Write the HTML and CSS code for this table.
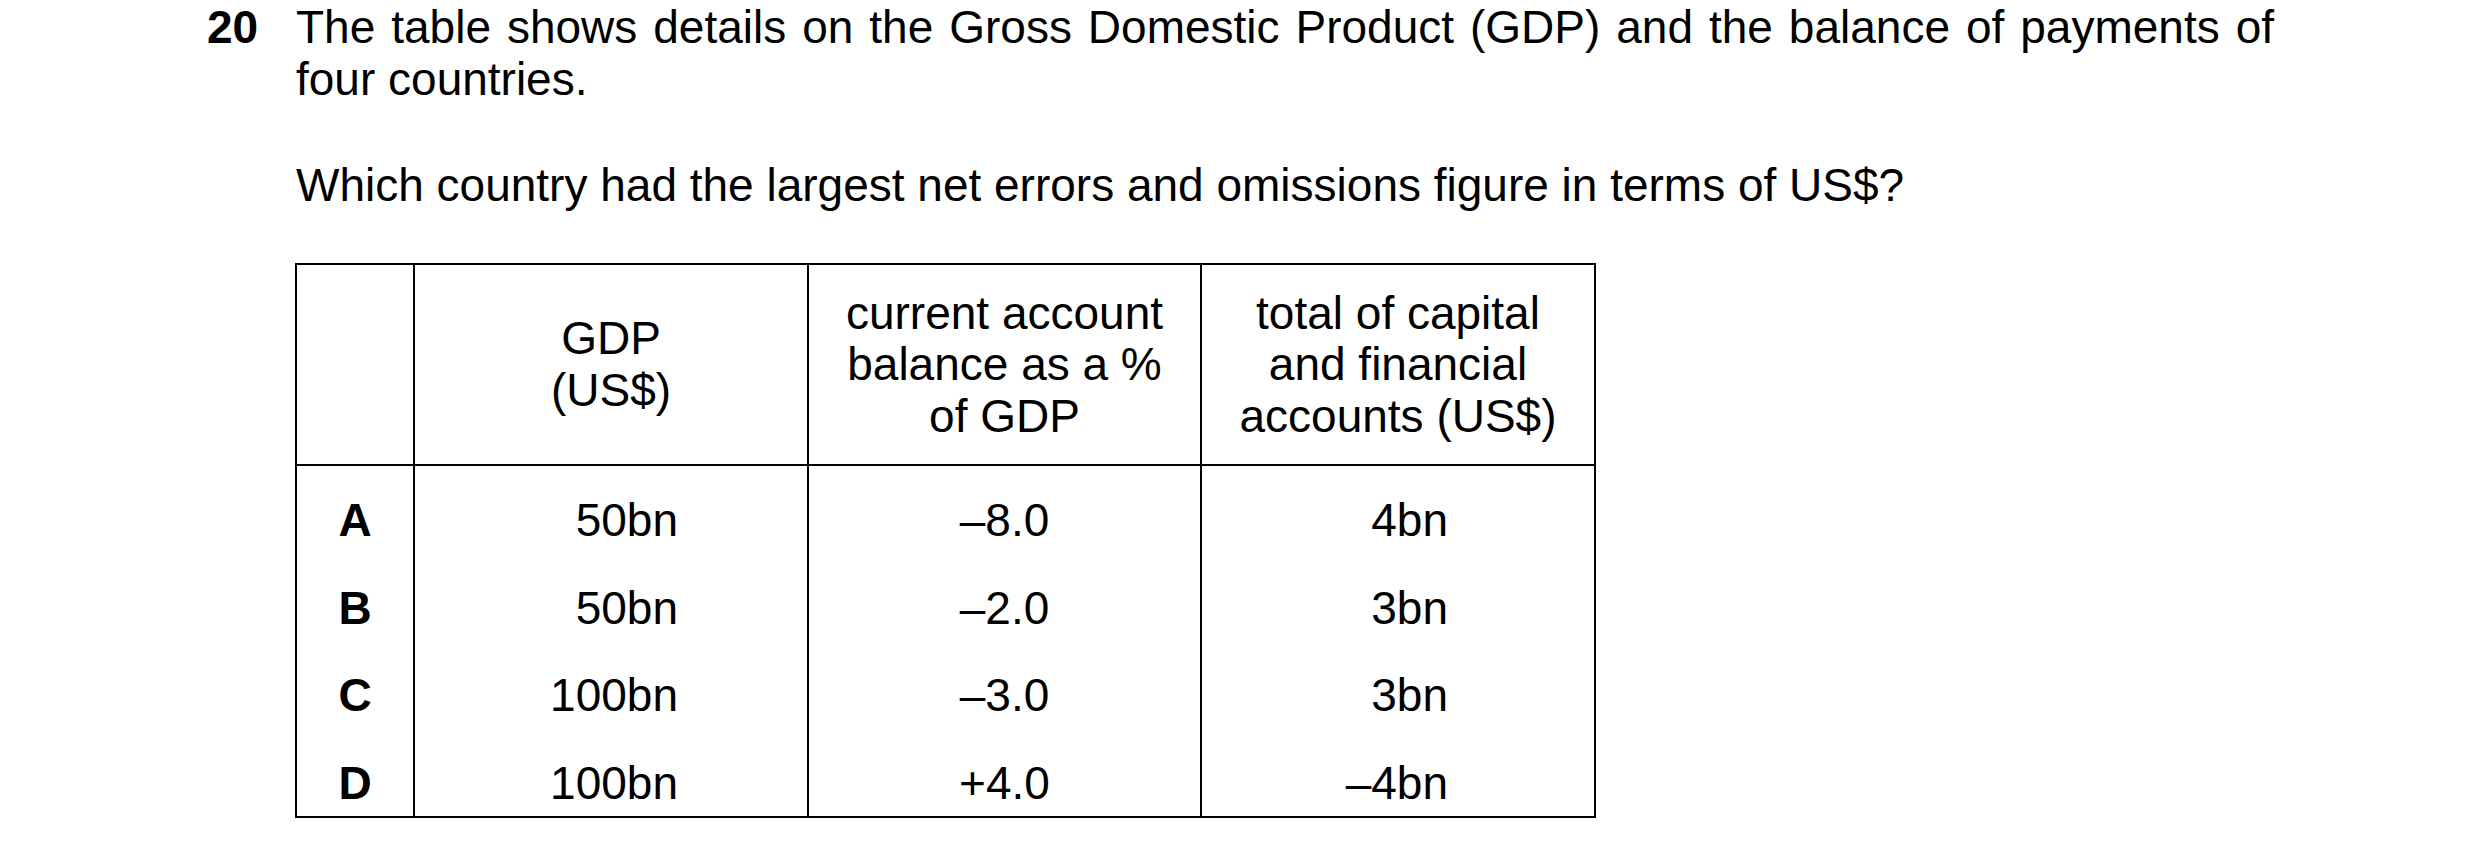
FILE: index.html
```html
<!DOCTYPE html>
<html lang="en">
<head>
<meta charset="utf-8">
<title>Question 20</title>
<link rel="stylesheet" href="styles.css">
</head>
<body>
<div class="question">
  <div class="qnum">20</div>
  <div class="qbody">
    <p class="stem">The table shows details on the Gross Domestic Product (GDP) and the balance of payments of four countries.</p>
    <p class="ask">Which country had the largest net errors and omissions figure in terms of US$?</p>
    <table class="data">
      <colgroup>
        <col class="c-key">
        <col class="c-gdp">
        <col class="c-cur">
        <col class="c-cap">
      </colgroup>
      <thead>
        <tr>
          <th></th>
          <th>GDP<br>(US$)</th>
          <th>current account<br>balance as a %<br>of GDP</th>
          <th>total of capital<br>and financial<br>accounts (US$)</th>
        </tr>
      </thead>
      <tbody>
        <tr><td class="key">A</td><td class="gdp">50bn</td><td class="cur">&ndash;8.0</td><td class="cap">4bn</td></tr>
        <tr><td class="key">B</td><td class="gdp">50bn</td><td class="cur">&ndash;2.0</td><td class="cap">3bn</td></tr>
        <tr><td class="key">C</td><td class="gdp">100bn</td><td class="cur">&ndash;3.0</td><td class="cap">3bn</td></tr>
        <tr><td class="key">D</td><td class="gdp">100bn</td><td class="cur">+4.0</td><td class="cap">&ndash;4bn</td></tr>
      </tbody>
    </table>
  </div>
</div>
</body>
</html>
```

FILE: styles.css
```css
html, body {
  margin: 0;
  padding: 0;
  background: #fff;
}

body {
  font-family: "Liberation Sans", Arial, sans-serif;
  font-size: 46px;
  line-height: 52px;
  color: #000;
}

.question {
  display: flex;
  padding-left: 207px;
  padding-top: 1px;
}

.qnum {
  width: 89px;
  flex: none;
  font-weight: bold;
}

.qbody {
  width: 1978px;
  flex: none;
}

.stem {
  margin: 0;
  text-align: justify;
}

.ask {
  margin: 54px 0 0 0;
}

.data {
  margin-top: 51.5px;
  margin-left: -1px;
  border-collapse: collapse;
  table-layout: fixed;
  width: 1299px;
}

.c-key { width: 118px; }
.c-gdp { width: 394px; }
.c-cur { width: 393px; }
.c-cap { width: 394px; }

.data th,
.data td {
  border-left: 2px solid #000;
  border-right: 2px solid #000;
}

.data th {
  font-weight: normal;
  text-align: center;
  line-height: 51.5px;
  padding: 23px 0 22px 0;
  border-top: 2px solid #000;
  border-bottom: 2px solid #000;
}

.data td {
  padding: 28px 0 7.5px 0;
  line-height: 52px;
}

.data tbody tr:last-child td {
  border-bottom: 2px solid #000;
}

.data td.key {
  font-weight: bold;
  text-align: center;
}

.data td.gdp {
  text-align: right;
  padding-right: 129px;
}

.data td.cur {
  text-align: center;
}

.data td.cap {
  text-align: right;
  padding-right: 146px;
}
```
